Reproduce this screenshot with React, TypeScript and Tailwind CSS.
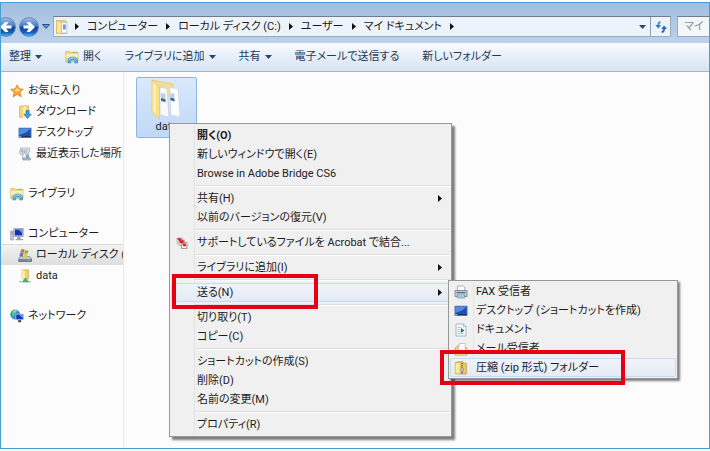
import type { ReactNode } from "react";
import clsx from "clsx";

type IconProps = { className?: string };

const FolderIcon = ({ className }: IconProps) => (
  <svg className={className} viewBox="0 0 14 14" fill="none">
    <path d="M1.500.5H10l1.500 1v12h-10z" fill="#f0d077" stroke="#cfa94a" strokeWidth=".6" />
    <path d="M6.500 2.500h5.500v10.500H6.500z" fill="#f8fbff" stroke="#9eb4cb" strokeWidth=".6" />
    <path d="M8 4.500h2.800v5H8z" fill="#6f9fd0" />
    <path d="M1.500.5l5 1.800v11.500l-5-1z" fill="#fbe596" stroke="#d6b558" strokeWidth=".6" />
  </svg>
);

const LibraryIcon = ({ className }: IconProps) => (
  <svg className={className} viewBox="0 0 14 14" fill="none">
    <path d="M.8 2.500V1.400h4l1 1.100H13v9.300H.8z" fill="#f3d982" stroke="#c9a956" strokeWidth=".6" />
    <path d="M7.500 1.800h4.800v1.200H7.500z" fill="#8ccb74" />
    <path d="M1.200 4h11.500v4H1.200z" fill="#fdf0b8" />
    <path d="M3 13v-2.800C3 8 4.800 7 7.600 7s4.900 1 4.900 3.200V13h-2.700v-1.800c0-.8-.8-1.300-2.100-1.300s-2 .5-2 1.300V13z" fill="#55b2e6" stroke="#2e83bd" strokeWidth=".6" />
    <path d="M4 9.700c.4-1.300 1.800-1.800 3.700-1.800s3.100.5 3.700 1.600" stroke="#c9ecfb" strokeWidth=".7" />
  </svg>
);

const StarIcon = ({ className }: IconProps) => (
  <svg className={className} viewBox="0 0 14 14" fill="none">
    <path d="M7.200.8l1.800 4 4.300.4-3.300 2.900 1.200 4.600-4.100-2.300-3.900 2.500 1-4.600L.7 5.400l4.500-.5z" fill="#f9a83a" stroke="#e07d1c" strokeWidth=".8" strokeLinejoin="round" />
    <path d="M7.100 3l1 2.600 2.700.3-3.500 1.600-3.600-1.300 2.400-.3z" fill="#ffe08c" />
  </svg>
);

const DownloadIcon = ({ className }: IconProps) => (
  <svg className={className} viewBox="0 0 14 14" fill="none">
    <path d="M1.500 1.500L5 .8h5.500V12H5l-3.500.5z" fill="#f3d67f" stroke="#c9a64b" strokeWidth=".6" />
    <path d="M5 2.500L8 1v11.500l-3 .8z" fill="#fff0ad" />
    <path d="M8 5.500h3.200v3.700h2.200L9.600 13.500 5.800 9.200H8z" fill="#3f9be0" stroke="#1e6bb4" strokeWidth=".6" />
  </svg>
);

const DesktopIcon = ({ className }: IconProps) => (
  <svg className={className} viewBox="0 0 14 14" fill="none">
    <path d="M.8 2h12.400v9.500H.8z" fill="#1d4fb0" stroke="#8796ab" strokeWidth=".7" />
    <path d="M1.200 2.400h11.600L8 6.500 1.200 9z" fill="#4f8be0" />
    <path d="M1.200 10h11.600v1.400H1.200z" fill="#26344c" />
    <path d="M1.200 10h2v1.400h-2z" fill="#5ec6e8" />
  </svg>
);

const RecentIcon = ({ className }: IconProps) => (
  <svg className={className} viewBox="0 0 14 14" fill="none">
    <path d="M2.500 1h9.200v3.400h-1V12H4.500V4.500h-2z" fill="#eef1f5" stroke="#9aa4b0" strokeWidth=".7" />
    <path d="M6 3h4M6 5h3.500M7 7h3" stroke="#8796a8" strokeWidth=".8" />
    <circle cx="4" cy="5" r="2.500" fill="#d8e3ee" stroke="#8592a0" strokeWidth=".6" />
    <path d="M4 3.500V5h1.200" stroke="#4d5e72" strokeWidth=".6" />
    <path d="M5 11h7.500v2H5z" fill="#b4bdc8" stroke="#7e8b99" strokeWidth=".6" />
    <path d="M8 8h3v3H8z" fill="#7fa2c4" />
  </svg>
);

const ComputerIcon = ({ className }: IconProps) => (
  <svg className={className} viewBox="0 0 14 14" fill="none">
    <path d="M.7 4h2.600v9H.7z" fill="#c5ccd6" stroke="#7f8a98" strokeWidth=".6" />
    <path d="M1.200 5.500h1.600M1.200 7h1.600" stroke="#6d7a8b" strokeWidth=".6" />
    <path d="M3.800 1.500h9.500v8H3.800z" fill="#dce3ec" stroke="#8793a3" strokeWidth=".7" />
    <path d="M4.800 2.500h7.500v6H4.800z" fill="#1630b4" />
    <path d="M8.500 2.500h3.800v4z" fill="#6b9cf0" />
    <path d="M7.200 9.700h3l.8 2.300h2v1.300H5.500V12h1.300z" fill="#9aa5b3" />
  </svg>
);

const DriveIcon = ({ className }: IconProps) => (
  <svg className={className} viewBox="0 0 14 14" fill="none">
    <path d="M2.500 8.500h9l2 2.500v2.500H.7V11z" fill="#7b8794" stroke="#4c5866" strokeWidth=".6" />
    <path d="M2.500 8.500h9L13 11H1z" fill="#c0c9d3" />
    <path d="M9.500 11.700h2.500v.8H9.500z" fill="#5de06a" />
    <path d="M3 1.700c1.300-.9 2.300-.8 3.500 0L5.700 4.900c-1.200-.7-2.200-.7-3.500 0z" fill="#ed6a2f" />
    <path d="M7 2c1.200.7 2.200.7 3.500 0L9.700 5.200c-1.200.7-2.200.7-3.500 0z" fill="#76b93c" />
    <path d="M2.100 5.400c1.300-.8 2.300-.7 3.500 0l-.9 3.200c-1.200-.7-2.200-.7-3.400 0z" fill="#3e83d6" />
    <path d="M6.100 5.700c1.200.7 2.200.7 3.500 0l-.9 3.200c-1.200.7-2.200.7-3.500 0z" fill="#f7c52e" />
  </svg>
);

const SharedFolderIcon = ({ className }: IconProps) => (
  <svg className={className} viewBox="0 0 14 14" fill="none">
    <path d="M4 .8h6.500V10H4z" fill="#f0cf70" stroke="#c9a64b" strokeWidth=".6" />
    <path d="M4 .8l3 1.300v8.600L4 10z" fill="#fdeba6" />
    <path d="M6.500 9h1.800v2H6.500z" fill="#3b9e63" />
    <path d="M1 12h12v1.300H1z" fill="#a9c3ba" />
    <path d="M5.500 10.500h4l1 2.800h-6z" fill="#36ba70" />
  </svg>
);

const NetworkIcon = ({ className }: IconProps) => (
  <svg className={className} viewBox="0 0 14 14" fill="none">
    <circle cx="5.200" cy="5.500" r="4.500" fill="#2f91d2" stroke="#1b6297" strokeWidth=".6" />
    <path d="M2 3.500C3 1.800 5 1.300 6.200 1.800L6 4 3.800 5.300 4.200 8 2.500 7z" fill="#6fcb6f" />
    <path d="M3 2.800C4 1.700 6 1.500 7.500 2.300" stroke="#c7ecfb" strokeWidth=".8" />
    <path d="M5.800 5.200h7.500v5.500H5.800z" fill="#1836b8" stroke="#b8c5d8" strokeWidth=".8" />
    <path d="M9 5.700h3.800v3.200z" fill="#6d9df0" />
    <path d="M8.500 11h2.300l.6 2.300H8z" fill="#3e4a60" />
  </svg>
);

const AcrobatIcon = ({ className }: IconProps) => (
  <svg className={className} viewBox="0 0 14 14" fill="none">
    <path d="M2 2h5.500v5.500H2z" fill="#f6dede" stroke="#b7a4a4" strokeWidth=".7" />
    <path d="M4 4h5.500v5.500H4z" fill="#fbeeee" stroke="#a89393" strokeWidth=".7" />
    <path d="M6.500 6.500H12v6H6.500z" fill="#f7eeee" stroke="#8f8585" strokeWidth=".8" />
    <path d="M1.800 2.200h4.500v2H3.500zM4 4.300h4.800v2L7 7.200H5zM7 7.500h3.800v1.500L12 10.200H8.500z" fill="#dd1f2c" />
  </svg>
);

const PrinterIcon = ({ className }: IconProps) => (
  <svg className={className} viewBox="0 0 14 14" fill="none">
    <path d="M3.500 1h6l1.200 1v4H3.500z" fill="#fafcff" stroke="#8c9aaa" strokeWidth=".7" />
    <path d="M1 5.500h12v6H1z" fill="#c3ccd6" stroke="#6f7d8c" strokeWidth=".8" />
    <path d="M2.500 7.500h9" stroke="#596775" />
    <path d="M3.500 9h7v4h-7z" fill="#9ed0f2" stroke="#7890a5" strokeWidth=".7" />
  </svg>
);

const DocumentIcon = ({ className }: IconProps) => (
  <svg className={className} viewBox="0 0 14 14" fill="none">
    <path d="M2 1h7.500L12 3.500V13H2z" fill="#f7fbff" stroke="#8fa5bb" strokeWidth=".8" />
    <path d="M9.500 1v2.500H12" stroke="#8fa5bb" strokeWidth=".7" />
    <path d="M3.500 4.500h4M3.500 6.500h3M3.500 8.500h3M3.500 10.500h6" stroke="#a4b7ca" strokeWidth=".8" />
    <path d="M7 5l3.500 2.500L7 10z" fill="#2468b4" />
  </svg>
);

const MailIcon = ({ className }: IconProps) => (
  <svg className={className} viewBox="0 0 14 14" fill="none">
    <path d="M1 6l6-4.500L13 6v7H1z" fill="#f4cf75" stroke="#d09d3c" strokeWidth=".7" />
    <path d="M5.500 1.500h5.700V9H4z" fill="#fff" stroke="#a9b4c0" strokeWidth=".7" />
    <path d="M1 13l5-5h2l5 5z" fill="#fbe5a6" stroke="#d4a74d" strokeWidth=".6" />
  </svg>
);

const ZipIcon = ({ className }: IconProps) => (
  <svg className={className} viewBox="0 0 14 14" fill="none">
    <path d="M1.200 1.500l4-.8H9v1.500h3.300V13h-8l-3.100-.5z" fill="#edca62" stroke="#b58f34" strokeWidth=".7" />
    <path d="M1.500 2l4 .8v10L1.500 12z" fill="#fdeba0" />
    <path d="M8 2v11" stroke="#6b6a66" strokeWidth="1.800" strokeDasharray="1 .8" />
    <path d="M7 7h2.300v3H7z" fill="#d8dce1" stroke="#676d75" strokeWidth=".5" />
  </svg>
);

const BigFolderIcon = () => (
  <svg className="h-10 w-8" viewBox="0 0 32 40" fill="none">
    <path d="M1 1l21 4v6L9 30z" fill="#f3de97" stroke="#dcc26f" strokeWidth=".6" />
    <path d="M19 8.500l8 1.500 2 28-9-2z" fill="#fdfeff" stroke="#cfd6dd" strokeWidth=".7" />
    <path d="M19.500 14l4 .8v8l-4-1z" fill="#b5d2ea" />
    <path d="M19.500 18.500l4 1.500v2.300l-4-1.200z" fill="#34618c" />
    <path d="M9 8l7 1.500 2 28.500-9-2z" fill="#f8fafc" stroke="#c7ced6" strokeWidth=".7" />
    <path d="M10 14l4.500.8v9l-4.500-1z" fill="#b5d2ea" />
    <path d="M10 19l4.500 1.500v2.300L10 21.500z" fill="#34618c" />
    <path d="M1 1l7.500 7v32L1 33z" fill="#f9e08b" stroke="#dfc265" strokeWidth=".6" />
    <path d="M1.800 3L5 6.200v29L1.800 32z" fill="#fff0b5" />
  </svg>
);

const RoundArrow = ({ flip }: { flip?: boolean }) => (
  <svg className={clsx("h-5 w-5", flip && "rotate-180")} viewBox="0 0 20 20" fill="none">
    <defs>
      <linearGradient id={flip ? "orbBack" : "orbNext"} x1="0" y1={flip ? "1" : "0"} x2="0" y2={flip ? "0" : "1"}>
        <stop offset="0" stopColor="#a3c3ea" />
        <stop offset=".45" stopColor="#3f78c2" />
        <stop offset=".52" stopColor="#103f97" />
        <stop offset=".8" stopColor="#1762bd" />
        <stop offset="1" stopColor="#4cc4f5" />
      </linearGradient>
    </defs>
    <circle cx="10" cy="10" r="9.400" fill={flip ? "url(#orbBack)" : "url(#orbNext)"} stroke="#5a75a3" strokeWidth=".8" />
    <path d="M4.500 8.500h5.200L7.500 5h3.400l5.100 5-5.100 5H7.500l2.200-3.500H4.500z" fill="#fff" />
  </svg>
);

const Down = () => (
  <svg className="h-1 w-[7px]" viewBox="0 0 7 4">
    <path d="M0 0h7L3.500 4z" fill="#2b4470" />
  </svg>
);

const Right = () => (
  <svg className="h-[7px] w-1 shrink-0" viewBox="0 0 4 7">
    <path d="M0 0v7l4-3.500z" fill="#111" />
  </svg>
);

const crumbs = ["コンピューター", "ローカル ディスク (C:)", "ユーザー", "マイ ドキュメント"];

const tools: { label: string; icon?: ReactNode; menu?: boolean }[] = [
  { label: "整理", menu: true },
  { label: "開く", icon: <LibraryIcon className="h-3.5 w-3.5" /> },
  { label: "ライブラリに追加", menu: true },
  { label: "共有", menu: true },
  { label: "電子メールで送信する" },
  { label: "新しいフォルダー" },
];

const navGroups = [
  {
    label: "お気に入り",
    icon: StarIcon,
    items: [
      { label: "ダウンロード", icon: DownloadIcon },
      { label: "デスクトップ", icon: DesktopIcon },
      { label: "最近表示した場所", icon: RecentIcon },
    ],
  },
  { label: "ライブラリ", icon: LibraryIcon, items: [] },
  {
    label: "コンピューター",
    icon: ComputerIcon,
    items: [
      { label: "ローカル ディスク (C:)", icon: DriveIcon, selected: true },
      { label: "data", icon: SharedFolderIcon },
    ],
  },
  { label: "ネットワーク", icon: NetworkIcon, items: [] },
];

type Entry = {
  label: string;
  icon?: (props: IconProps) => ReactNode;
  bold?: boolean;
  arrow?: boolean;
  active?: boolean;
};

const menuGroups: Entry[][] = [
  [
    { label: "開く(O)", bold: true },
    { label: "新しいウィンドウで開く(E)" },
    { label: "Browse in Adobe Bridge CS6" },
  ],
  [{ label: "共有(H)", arrow: true }, { label: "以前のバージョンの復元(V)" }],
  [{ label: "サポートしているファイルを Acrobat で結合...", icon: AcrobatIcon }],
  [{ label: "ライブラリに追加(I)", arrow: true }],
  [{ label: "送る(N)", arrow: true, active: true }],
  [{ label: "切り取り(T)" }, { label: "コピー(C)" }],
  [{ label: "ショートカットの作成(S)" }, { label: "削除(D)" }, { label: "名前の変更(M)" }],
  [{ label: "プロパティ(R)" }],
];

const sendTo: Entry[] = [
  { label: "FAX 受信者", icon: PrinterIcon },
  { label: "デスクトップ (ショートカットを作成)", icon: DesktopIcon },
  { label: "ドキュメント", icon: DocumentIcon },
  { label: "メール受信者", icon: MailIcon },
  { label: "圧縮 (zip 形式) フォルダー", icon: ZipIcon, active: true },
];

const MenuItem = ({ label, icon: Icon, bold, arrow, active }: Entry) => (
  <button
    type="button"
    role="menuitem"
    className={clsx(
      "flex h-[19px] w-full items-center rounded-xs pr-2 text-left whitespace-nowrap",
      bold && "font-bold",
      active && "bg-linear-to-b from-[#f1f4f9] to-[#e3ebf5] ring-1 ring-[#c6daf1] ring-inset",
    )}
  >
    <span className="flex w-[26px] shrink-0 pl-1">{Icon && <Icon className="h-3.5 w-3.5" />}</span>
    <span className="flex-1">{label}</span>
    {arrow && <Right />}
  </button>
);

const SendToMenu = () => (
  <div
    role="menu"
    className="absolute top-[156px] left-[278px] w-[230px] border border-[#979797] bg-[#f0f0f0] p-px shadow-[2px_2px_2px_rgba(0,0,0,0.5)]"
  >
    <div className="absolute inset-y-0.5 left-6 w-px bg-[#e2e3e3]" />
    <div className="relative">
      {sendTo.map((entry) => (
        <MenuItem key={entry.label} {...entry} />
      ))}
    </div>
    <div className="absolute top-[69px] -left-[9px] h-[35px] w-[185px] border-4 border-[#e60012]" />
  </div>
);

const ContextMenu = () => (
  <div
    role="menu"
    className="absolute top-[51px] left-[45px] w-[283px] border border-[#979797] bg-[#f0f0f0] px-px py-0.5 shadow-[3px_3px_2px_rgba(0,0,0,0.5)]"
  >
    <div className="absolute inset-y-0.5 left-6 w-px bg-[#e2e3e3]" />
    <div className="relative">
      {menuGroups.map((group, i) => (
        <div key={i}>
          {i > 0 && <hr className="my-0.5 ml-6 h-0.5 border-t border-b border-t-[#dedede] border-b-white" />}
          {group.map((entry) => (
            <MenuItem key={entry.label} {...entry} />
          ))}
        </div>
      ))}
    </div>
    <div className="absolute top-[150px] left-0.5 h-[35px] w-[146px] border-4 border-[#e60012]" />
    <SendToMenu />
  </div>
);

const AddressBar = () => (
  <div className="flex h-10 items-end bg-linear-to-b from-[#a2bfdf] to-[#bdd2ec] pb-1.5">
    <div className="-ml-[5px] flex h-[21px] items-center gap-[3px]">
      <button type="button" aria-label="戻る">
        <RoundArrow flip />
      </button>
      <button type="button" aria-label="進む">
        <RoundArrow />
      </button>
      <button type="button" aria-label="履歴" className="pr-[3px]">
        <svg className="h-[5px] w-2" viewBox="0 0 8 5">
          <path d="M.5.500h7L4 4.500z" fill="#5e8fd0" stroke="#23528f" />
        </svg>
      </button>
    </div>
    <div className="flex h-[21px] min-w-0 flex-1 items-center border border-[#9ba9ba] border-t-[#6f7c8d] bg-[#edf3fb] pl-px">
      <FolderIcon className="h-4 w-3.5 shrink-0" />
      <nav className="flex flex-1 items-center gap-2 pl-1.5 whitespace-nowrap">
        <Right />
        {crumbs.map((crumb) => (
          <a key={crumb} href="#" className="flex items-center gap-2">
            {crumb}
            <Right />
          </a>
        ))}
      </nav>
      <button type="button" aria-label="以前の場所" className="px-1">
        <Down />
      </button>
      <button type="button" aria-label="更新" className="flex h-full w-5 items-center justify-center border-l border-[#8f9dae]">
        <svg className="h-3 w-3" viewBox="0 0 12 12" fill="none">
          <path d="M5.500 1C3.800 1.300 3.200 2.300 3.200 4.500" stroke="#3b98d5" strokeWidth="1.800" />
          <path d="M.3 4h5.800L3.200 7.500z" fill="#3278c2" />
          <path d="M6.700 11.200c1.800-.3 2.400-1.300 2.400-3.500" stroke="#2867b4" strokeWidth="1.800" />
          <path d="M6.200 8H12L9.100 4.500z" fill="#2867b4" />
        </svg>
      </button>
    </div>
    <input
      aria-label="検索"
      placeholder="マイ"
      className="ml-1.5 h-[21px] w-8 border border-r-0 border-[#9ba9ba] border-t-[#6f7c8d] bg-[#f3f7fc] pl-1.5 placeholder:text-[#8a8f96]"
    />
  </div>
);

const Toolbar = () => (
  <div className="flex h-[29px] items-center gap-[23px] border-b border-[#a3b3c9] bg-linear-to-b from-[#fafcff] via-[#e6eef9] via-50% to-[#d9e5f4] pl-2 whitespace-nowrap text-[#1e395b]">
    {tools.map(({ label, icon, menu }) => (
      <button key={label} type="button" className="flex items-center gap-1">
        {icon}
        {label}
        {menu && <Down />}
      </button>
    ))}
  </div>
);

const Sidebar = () => (
  <aside className="flex w-[123px] shrink-0 flex-col gap-[19px] overflow-hidden border-r border-[#dfe9f3] pt-2 whitespace-nowrap">
    {navGroups.map(({ label, icon: Icon, items }) => (
      <div key={label}>
        <a href="#" className="flex h-[21px] items-center gap-1 pl-[9px]">
          <Icon className="h-3.5 w-3.5 shrink-0" />
          {label}
        </a>
        {items.map((item) => (
          <a
            key={item.label}
            href="#"
            className={clsx(
              "flex h-[21px] items-center gap-1 pl-[17px]",
              "selected" in item && "border-t border-[#d9d9d9] bg-linear-to-b from-[#f2f2f2] to-[#dedede]",
            )}
          >
            <item.icon className="h-3.5 w-3.5 shrink-0" />
            {item.label}
          </a>
        ))}
      </div>
    ))}
  </aside>
);

const App = () => {
  return (
    <div className="flex min-h-screen flex-col bg-white pt-0.5 pb-0.5 font-[Roboto,'Noto_Sans_CJK_JP',sans-serif] text-[11px] leading-4 text-[#1c1c1c] [font-feature-settings:'palt']">
      <div className="flex flex-1 flex-col overflow-hidden border border-[#4a9dd3] bg-[#fcfcfc]">
        <AddressBar />
        <Toolbar />
        <div className="flex flex-1">
          <Sidebar />
          <main className="relative flex-1 pt-[5px] pl-3">
            <button
              type="button"
              className="flex h-[61px] w-[61px] flex-col items-center rounded-xs border border-[#8db5e0] bg-linear-to-b from-[#dbe9fb] to-[#bfd8f8] pt-px"
            >
              <BigFolderIcon />
              data
            </button>
            <ContextMenu />
          </main>
        </div>
      </div>
    </div>
  );
};

export default App;
